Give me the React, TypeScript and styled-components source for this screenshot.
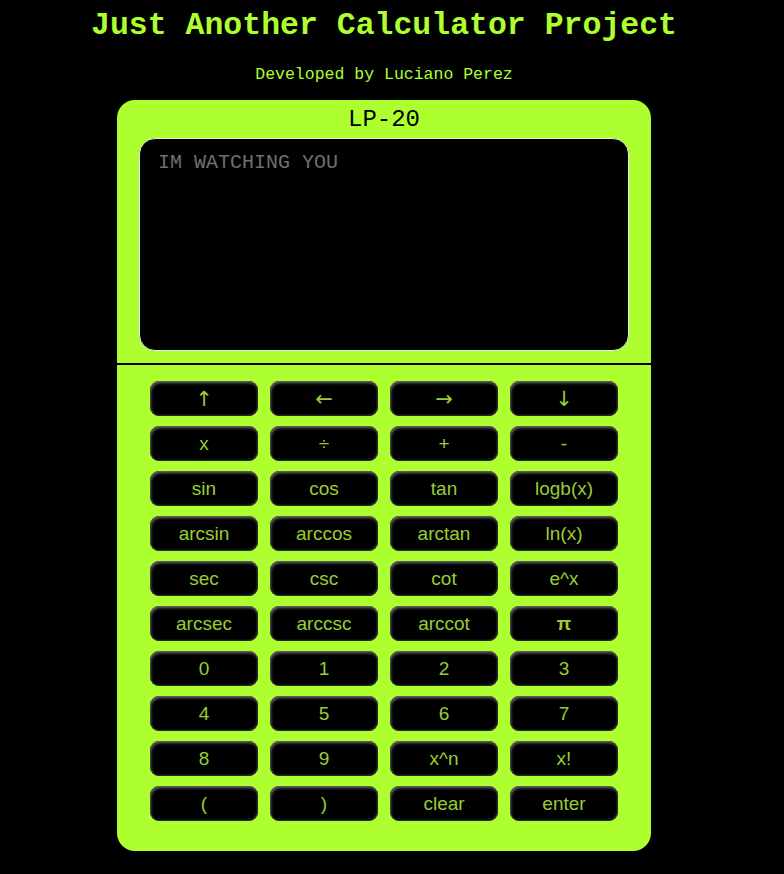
import styled, { createGlobalStyle } from "styled-components";

const keys = [
  ["↑", "←", "→", "↓"],
  ["x", "÷", "+", "-"],
  ["sin", "cos", "tan", "logb(x)"],
  ["arcsin", "arccos", "arctan", "ln(x)"],
  ["sec", "csc", "cot", "e^x"],
  ["arcsec", "arccsc", "arccot", "π"],
  ["0", "1", "2", "3"],
  ["4", "5", "6", "7"],
  ["8", "9", "x^n", "x!"],
  ["(", ")", "clear", "enter"],
];

const arrows = ["↑", "←", "→", "↓"];

const GlobalStyle = createGlobalStyle`
  html, body {
    margin: 0;
    background: #000;
  }
`;

const App = () => {
  return (
    <Page>
      <GlobalStyle />
      <Title>Just Another Calculator Project</Title>
      <Credit>Developed by Luciano Perez</Credit>
      <CalcBody>
        <Model>LP-20</Model>
        <Screen placeholder="IM WATCHING YOU" />
        <Divider />
        <Keypad>
          {keys.flat().map((k) => (
            <Key key={k} $bold={k === "π"} $arrow={arrows.includes(k)}>
              {k}
            </Key>
          ))}
        </Keypad>
      </CalcBody>
    </Page>
  );
};

// the reference was shot with a scrollbar, so the content is centred in 768px
const Page = styled.div`
  display: flex;
  flex-direction: column;
  align-items: center;
  width: 768px;
  min-height: 874px;
  background: #000;
  padding-top: 8px;
  box-sizing: border-box;
`;

const Title = styled.h1`
  margin: 0;
  color: #adff2f;
  font-family: "Liberation Mono", "Courier New", monospace;
  font-size: 31.5px;
  font-weight: 700;
  line-height: 36px;
`;

const Credit = styled.div`
  margin-top: 21px;
  color: #adff2f;
  font-family: "Liberation Mono", "Courier New", monospace;
  font-size: 16.5px;
  line-height: 20px;
`;

const CalcBody = styled.div`
  margin-top: 15px;
  width: 534px;
  background: #adff2f;
  border-radius: 18px;
  display: flex;
  flex-direction: column;
  align-items: center;
  padding-bottom: 30px;
`;

const Model = styled.div`
  height: 38px;
  display: flex;
  align-items: center;
  color: #000;
  font-family: "Liberation Mono", "Courier New", monospace;
  font-size: 24px;
`;

const Screen = styled.textarea`
  width: 490px;
  height: 213px;
  box-sizing: border-box;
  resize: none;
  background: #000;
  border: 1px solid #e8e8e8;
  border-radius: 16px;
  padding: 12px 18px;
  color: #adff2f;
  font-family: "Liberation Mono", "Courier New", monospace;
  font-size: 20px;
  outline: none;

  &::placeholder {
    color: #6f6f6f;
  }
`;

const Divider = styled.div`
  align-self: stretch;
  height: 2px;
  margin-top: 12px;
  background: #000;
`;

const Keypad = styled.div`
  display: grid;
  grid-template-columns: repeat(4, 108px);
  grid-auto-rows: 35px;
  column-gap: 12px;
  row-gap: 10px;
  padding-top: 16px;
`;

const Key = styled.button<{ $bold?: boolean; $arrow?: boolean }>`
  background: #000;
  border: none;
  border-radius: 9px;
  box-shadow: inset 1px 2px 3px #6a6a6a, inset -1px -1px 2px #333;
  color: #9acd32;
  font-family: ${(p) =>
    p.$arrow ? `"DejaVu Sans", sans-serif` : `"Liberation Sans", Arial, sans-serif`};
  font-size: ${(p) => (p.$arrow ? "21px" : "19px")};
  font-weight: ${(p) => (p.$bold ? 700 : 400)};
  padding: 0;
  cursor: pointer;
`;

export default App;
